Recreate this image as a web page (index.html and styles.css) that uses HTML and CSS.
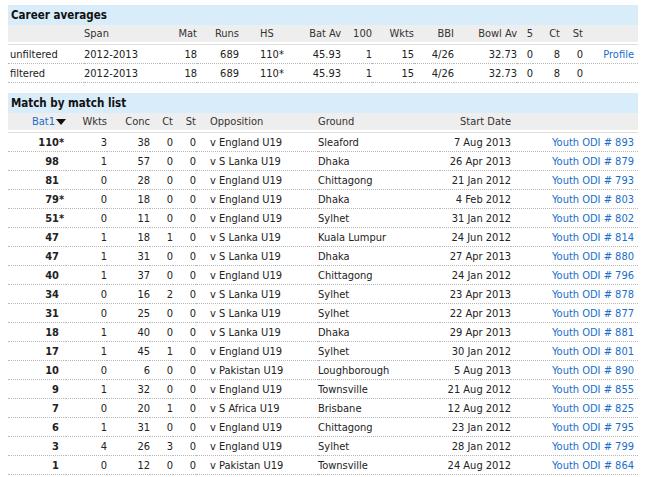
FILE: index.html
```html
<!DOCTYPE html>
<html>
<head>
<meta charset="utf-8">
<link rel="stylesheet" href="styles.css">
</head>
<body>
<div class="page">
  <section class="panel">
    <h2 class="band">Career averages</h2>
    <table class="stats career">
      <colgroup>
        <col style="width:76px"><col style="width:76px"><col style="width:37px"><col style="width:42px"><col style="width:61px"><col style="width:41px"><col style="width:31px"><col style="width:42px"><col style="width:40px"><col style="width:63px"><col style="width:16px"><col style="width:27px"><col style="width:23px"><col style="width:55px">
      </colgroup>
      <thead>
        <tr><th class="lbl"></th><th class="l">Span</th><th class="r">Mat</th><th class="r">Runs</th><th class="hs">HS</th><th class="r">Bat Av</th><th class="r">100</th><th class="r">Wkts</th><th class="r">BBI</th><th class="r">Bowl Av</th><th class="r">5</th><th class="r">Ct</th><th class="r">St</th><th></th></tr>
      </thead>
      <tbody>
        <tr><td class="lbl">unfiltered</td><td class="l">2012-2013</td><td class="r">18</td><td class="r">689</td><td class="hs">110*</td><td class="r">45.93</td><td class="r">1</td><td class="r">15</td><td class="r">4/26</td><td class="r">32.73</td><td class="r">0</td><td class="r">8</td><td class="r">0</td><td class="link r"><a href="#">Profile</a></td></tr>
        <tr><td class="lbl">filtered</td><td class="l">2012-2013</td><td class="r">18</td><td class="r">689</td><td class="hs">110*</td><td class="r">45.93</td><td class="r">1</td><td class="r">15</td><td class="r">4/26</td><td class="r">32.73</td><td class="r">0</td><td class="r">8</td><td class="r">0</td><td class="link r"></td></tr>
      </tbody>
    </table>
  </section>

  <section class="panel">
    <h2 class="band">Match by match list</h2>
    <table class="stats matches">
      <colgroup>
        <col style="width:58px"><col style="width:41px"><col style="width:43px"><col style="width:23px"><col style="width:23px"><col style="width:122px"><col style="width:122px"><col style="width:71px"><col style="width:127px">
      </colgroup>
      <thead>
        <tr><th class="bat"><a href="#" class="sort">Bat1<span class="arrow"></span></a></th><th class="r">Wkts</th><th class="r">Conc</th><th class="r">Ct</th><th class="r">St</th><th class="opp">Opposition</th><th class="l">Ground</th><th class="r">Start Date</th><th></th></tr>
      </thead>
      <tbody>
        <tr><td class="bat">110<span class="star">*</span></td><td class="r">3</td><td class="r">38</td><td class="r">0</td><td class="r">0</td><td class="opp">v England U19</td><td class="l">Sleaford</td><td class="r">7 Aug 2013</td><td class="link r"><a href="#">Youth ODI # 893</a></td></tr>
        <tr><td class="bat">98<span class="star"></span></td><td class="r">1</td><td class="r">57</td><td class="r">0</td><td class="r">0</td><td class="opp">v S Lanka U19</td><td class="l">Dhaka</td><td class="r">26 Apr 2013</td><td class="link r"><a href="#">Youth ODI # 879</a></td></tr>
        <tr><td class="bat">81<span class="star"></span></td><td class="r">0</td><td class="r">28</td><td class="r">0</td><td class="r">0</td><td class="opp">v England U19</td><td class="l">Chittagong</td><td class="r">21 Jan 2012</td><td class="link r"><a href="#">Youth ODI # 793</a></td></tr>
        <tr><td class="bat">79<span class="star">*</span></td><td class="r">0</td><td class="r">18</td><td class="r">0</td><td class="r">0</td><td class="opp">v England U19</td><td class="l">Dhaka</td><td class="r">4 Feb 2012</td><td class="link r"><a href="#">Youth ODI # 803</a></td></tr>
        <tr><td class="bat">51<span class="star">*</span></td><td class="r">0</td><td class="r">11</td><td class="r">0</td><td class="r">0</td><td class="opp">v England U19</td><td class="l">Sylhet</td><td class="r">31 Jan 2012</td><td class="link r"><a href="#">Youth ODI # 802</a></td></tr>
        <tr><td class="bat">47<span class="star"></span></td><td class="r">1</td><td class="r">18</td><td class="r">1</td><td class="r">0</td><td class="opp">v S Lanka U19</td><td class="l">Kuala Lumpur</td><td class="r">24 Jun 2012</td><td class="link r"><a href="#">Youth ODI # 814</a></td></tr>
        <tr><td class="bat">47<span class="star"></span></td><td class="r">1</td><td class="r">31</td><td class="r">0</td><td class="r">0</td><td class="opp">v S Lanka U19</td><td class="l">Dhaka</td><td class="r">27 Apr 2013</td><td class="link r"><a href="#">Youth ODI # 880</a></td></tr>
        <tr><td class="bat">40<span class="star"></span></td><td class="r">1</td><td class="r">37</td><td class="r">0</td><td class="r">0</td><td class="opp">v England U19</td><td class="l">Chittagong</td><td class="r">24 Jan 2012</td><td class="link r"><a href="#">Youth ODI # 796</a></td></tr>
        <tr><td class="bat">34<span class="star"></span></td><td class="r">0</td><td class="r">16</td><td class="r">2</td><td class="r">0</td><td class="opp">v S Lanka U19</td><td class="l">Sylhet</td><td class="r">23 Apr 2013</td><td class="link r"><a href="#">Youth ODI # 878</a></td></tr>
        <tr><td class="bat">31<span class="star"></span></td><td class="r">0</td><td class="r">25</td><td class="r">0</td><td class="r">0</td><td class="opp">v S Lanka U19</td><td class="l">Sylhet</td><td class="r">22 Apr 2013</td><td class="link r"><a href="#">Youth ODI # 877</a></td></tr>
        <tr><td class="bat">18<span class="star"></span></td><td class="r">1</td><td class="r">40</td><td class="r">0</td><td class="r">0</td><td class="opp">v S Lanka U19</td><td class="l">Dhaka</td><td class="r">29 Apr 2013</td><td class="link r"><a href="#">Youth ODI # 881</a></td></tr>
        <tr><td class="bat">17<span class="star"></span></td><td class="r">1</td><td class="r">45</td><td class="r">1</td><td class="r">0</td><td class="opp">v England U19</td><td class="l">Sylhet</td><td class="r">30 Jan 2012</td><td class="link r"><a href="#">Youth ODI # 801</a></td></tr>
        <tr><td class="bat">10<span class="star"></span></td><td class="r">0</td><td class="r">6</td><td class="r">0</td><td class="r">0</td><td class="opp">v Pakistan U19</td><td class="l">Loughborough</td><td class="r">5 Aug 2013</td><td class="link r"><a href="#">Youth ODI # 890</a></td></tr>
        <tr><td class="bat">9<span class="star"></span></td><td class="r">1</td><td class="r">32</td><td class="r">0</td><td class="r">0</td><td class="opp">v England U19</td><td class="l">Townsville</td><td class="r">21 Aug 2012</td><td class="link r"><a href="#">Youth ODI # 855</a></td></tr>
        <tr><td class="bat">7<span class="star"></span></td><td class="r">0</td><td class="r">20</td><td class="r">1</td><td class="r">0</td><td class="opp">v S Africa U19</td><td class="l">Brisbane</td><td class="r">12 Aug 2012</td><td class="link r"><a href="#">Youth ODI # 825</a></td></tr>
        <tr><td class="bat">6<span class="star"></span></td><td class="r">1</td><td class="r">31</td><td class="r">0</td><td class="r">0</td><td class="opp">v England U19</td><td class="l">Chittagong</td><td class="r">23 Jan 2012</td><td class="link r"><a href="#">Youth ODI # 795</a></td></tr>
        <tr><td class="bat">3<span class="star"></span></td><td class="r">4</td><td class="r">26</td><td class="r">3</td><td class="r">0</td><td class="opp">v England U19</td><td class="l">Sylhet</td><td class="r">28 Jan 2012</td><td class="link r"><a href="#">Youth ODI # 799</a></td></tr>
        <tr><td class="bat">1<span class="star"></span></td><td class="r">0</td><td class="r">12</td><td class="r">0</td><td class="r">0</td><td class="opp">v Pakistan U19</td><td class="l">Townsville</td><td class="r">24 Aug 2012</td><td class="link r"><a href="#">Youth ODI # 864</a></td></tr>
      </tbody>
    </table>
  </section>
</div>
</body>
</html>
```

FILE: styles.css
```css
html, body {
  margin: 0;
  padding: 0;
  background: #ffffff;
}

body {
  font-family: "DejaVu Sans Condensed", "DejaVu Sans", Tahoma, sans-serif;
  font-size: 11px;
  color: #222222;
}

.page {
  width: 630px;
  padding: 5px 0 0 8px;
  display: flex;
  flex-direction: column;
  gap: 10px;
}

.band {
  margin: 0;
  height: 20px;
  line-height: 20px;
  padding: 0 0 0 3px;
  background: #d9ecf9;
  font-size: 11.5px;
  font-weight: bold;
  color: #111111;
}

.stats {
  width: 630px;
  table-layout: fixed;
  border-collapse: separate;
  border-spacing: 0;
}

.stats th {
  height: 17px;
  padding: 0;
  background: #eeeeee;
  font-weight: normal;
  color: #333333;
  white-space: nowrap;
  border-bottom: 2px solid #ffffff;
  line-height: 17px;
}

.stats tbody tr:first-child td {
  border-top: 1px solid #dddddd;
}

.stats td {
  height: 17px;
  padding: 1px 0 0 0;
  line-height: 17px;
  white-space: nowrap;
  border-bottom: 1px dotted #b8b8b8;
}

.l { text-align: left; }
.r { text-align: right; }

.lbl { text-align: left; padding-left: 2px !important; }
.hs { text-align: left; padding-left: 21px !important; }
.opp { text-align: left; padding-left: 14px !important; }
.link { padding-right: 4px !important; }

.stats a {
  color: #1a6dcc;
  text-decoration: none;
}

.bat {
  text-align: right;
  font-weight: bold;
}

td.bat {
  color: #222222;
}

th.bat {
  padding-right: 0 !important;
}

.star {
  display: inline-block;
  width: 7px;
  text-align: left;
}

.sort {
  display: inline-flex;
  align-items: center;
  font-weight: normal;
}

.arrow {
  display: inline-block;
  width: 0;
  height: 0;
  margin-left: 1px;
  border-left: 5px solid transparent;
  border-right: 5px solid transparent;
  border-top: 6px solid #111111;
}
```
